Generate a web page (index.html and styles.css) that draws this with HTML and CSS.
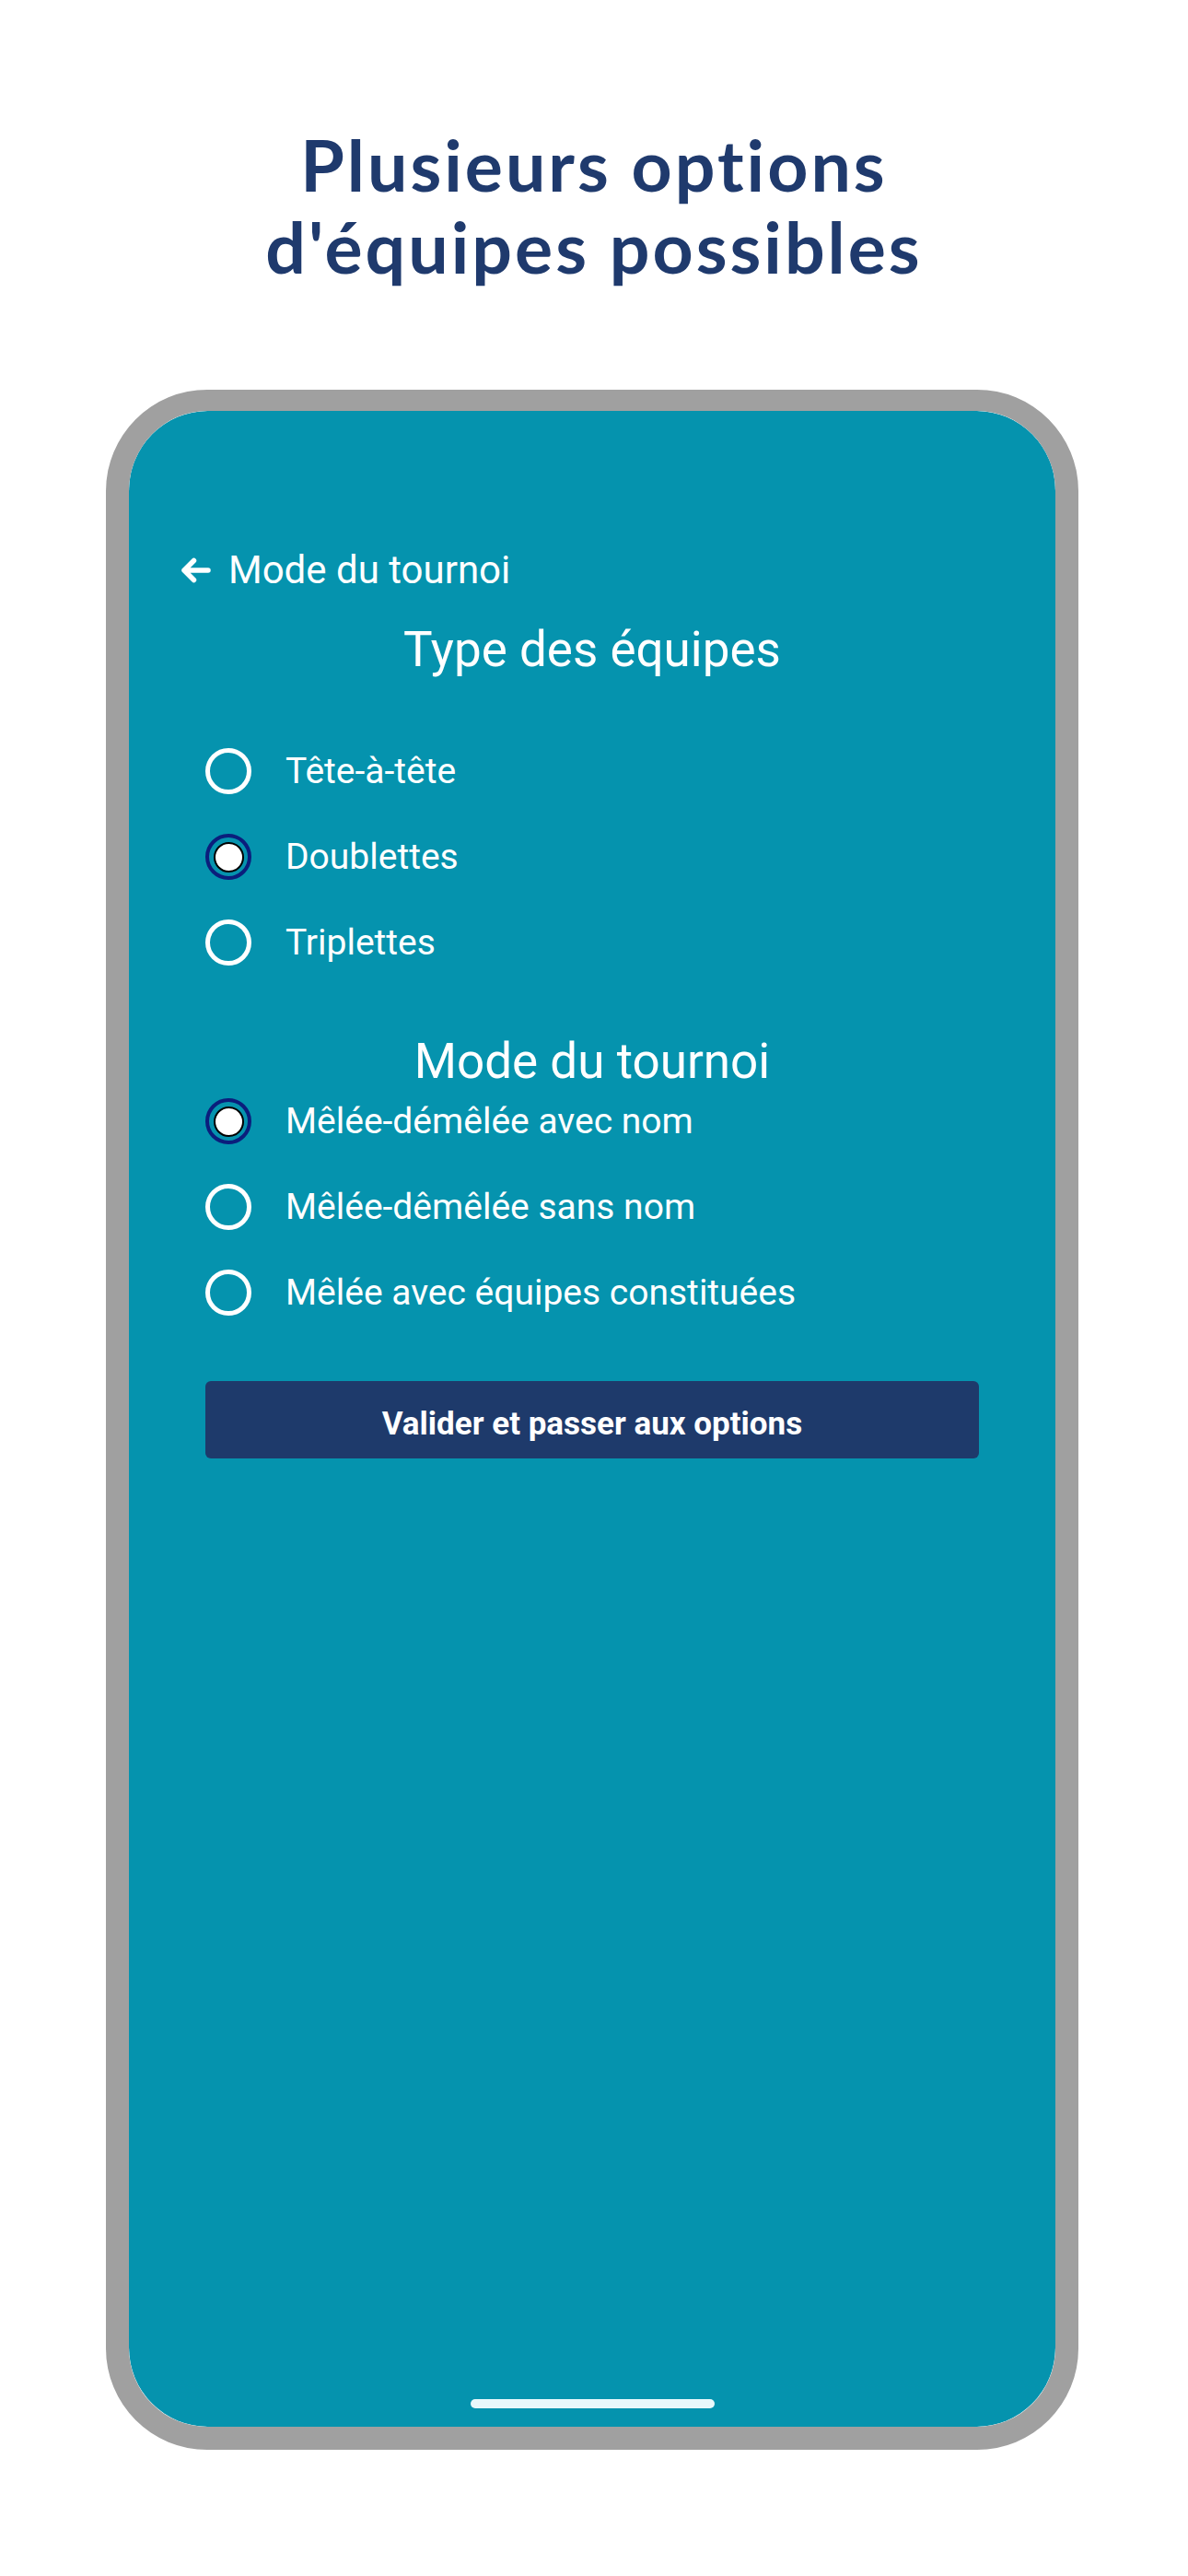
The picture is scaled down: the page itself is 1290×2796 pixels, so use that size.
FILE: index.html
```html
<!DOCTYPE html>
<html lang="fr">
<head>
<meta charset="utf-8"/>
<title>Plusieurs options d'équipes possibles</title>
<link rel="stylesheet" href="styles.css">
</head>
<body>
<h1 class="headline">Plusieurs options<br/>d'équipes possibles</h1>
<div class="phone">
  <div class="screen">
    <div class="back">
      <svg class="back-icon" width="33" height="28" viewBox="0 0 33 28">
        <path d="M30 14H4M14.5 3.5L4 14l10.5 10.5" fill="none" stroke="#fff" stroke-width="5.5" stroke-linecap="round" stroke-linejoin="round"/>
      </svg>
      <span>Mode du tournoi</span>
    </div>

    <h2 class="section-title">Type des équipes</h2>
    <div class="options">
      <div class="option"><span class="radio"></span><span class="label">Tête-à-tête</span></div>
      <div class="option"><span class="radio checked"></span><span class="label">Doublettes</span></div>
      <div class="option"><span class="radio"></span><span class="label">Triplettes</span></div>
    </div>

    <h2 class="section-title second">Mode du tournoi</h2>
    <div class="options tight">
      <div class="option"><span class="radio checked"></span><span class="label">Mêlée-démêlée avec nom</span></div>
      <div class="option"><span class="radio"></span><span class="label">Mêlée-dêmêlée sans nom</span></div>
      <div class="option"><span class="radio"></span><span class="label">Mêlée avec équipes constituées</span></div>
    </div>

    <button class="validate">Valider et passer aux options</button>

    <div class="home-bar"></div>
  </div>
</div>
</body>
</html>
```

FILE: styles.css
```css
body {
    margin: 0;
    padding-top: 134px;
    background-color: #ffffff;
    font-family: 'Roboto', 'Liberation Sans', sans-serif;
}
.headline {
    margin: 0;
    text-align: center;
    font-family: 'Lato', 'Open Sans', sans-serif;
    font-weight: 700;
    font-size: 77px;
    line-height: 89px;
    letter-spacing: 3px;
    color: #1f3a6d;
}
.phone {
    width: 1056px;
    margin: 111px 0 0 115px;
    box-sizing: border-box;
    border: 25px solid #a0a0a0;
    border-top-width: 23px;
    border-radius: 110px;
    overflow: hidden;
}
.screen {
    height: 2188px;
    background-color: #0593ae;
    border-radius: 86px;
    padding-top: 148px;
    box-sizing: border-box;
    display: flex;
    flex-direction: column;
    color: #ffffff;
}
.back {
    display: flex;
    align-items: center;
    gap: 19px;
    padding-left: 56px;
    height: 50px;
    font-size: 42px;
    line-height: 50px;
}
.back-icon {
    flex-shrink: 0;
}
.section-title {
    margin: 31px 0 0;
    text-align: center;
    font-weight: 400;
    font-size: 53px;
    line-height: 60px;
}
.section-title.second {
    margin-top: 74px;
}
.options {
    margin-top: 77px;
    padding: 0 83px;
    display: flex;
    flex-direction: column;
    gap: 43px;
}
.options.tight {
    margin-top: 10px;
}
.option {
    display: flex;
    align-items: center;
    gap: 37px;
    height: 50px;
}
.radio {
    width: 50px;
    height: 50px;
    box-sizing: border-box;
    border: 5px solid #ffffff;
    border-radius: 50%;
    display: flex;
    align-items: center;
    justify-content: center;
    flex-shrink: 0;
}
.radio.checked {
    border: 4px solid #0b1e7c;
}
.radio.checked::after {
    content: "";
    width: 33px;
    height: 33px;
    box-sizing: border-box;
    border: 2.5px solid #000000;
    border-radius: 50%;
    background-color: #ffffff;
}
.label {
    font-size: 39px;
    line-height: 46px;
}
.validate {
    margin: 71px 83px 0;
    height: 84px;
    padding: 9px 0 0;
    box-sizing: border-box;
    border: none;
    border-radius: 6px;
    background-color: #1e3a6b;
    color: #ffffff;
    font-family: 'Roboto', 'Liberation Sans', sans-serif;
    font-weight: 700;
    font-size: 35px;
    line-height: 41px;
    text-align: center;
    vertical-align: top;
}
.home-bar {
    margin-top: auto;
    margin-bottom: 20px;
    align-self: center;
    width: 265px;
    height: 10px;
    border-radius: 5px;
    background-color: #e8f8fb;
}
```
